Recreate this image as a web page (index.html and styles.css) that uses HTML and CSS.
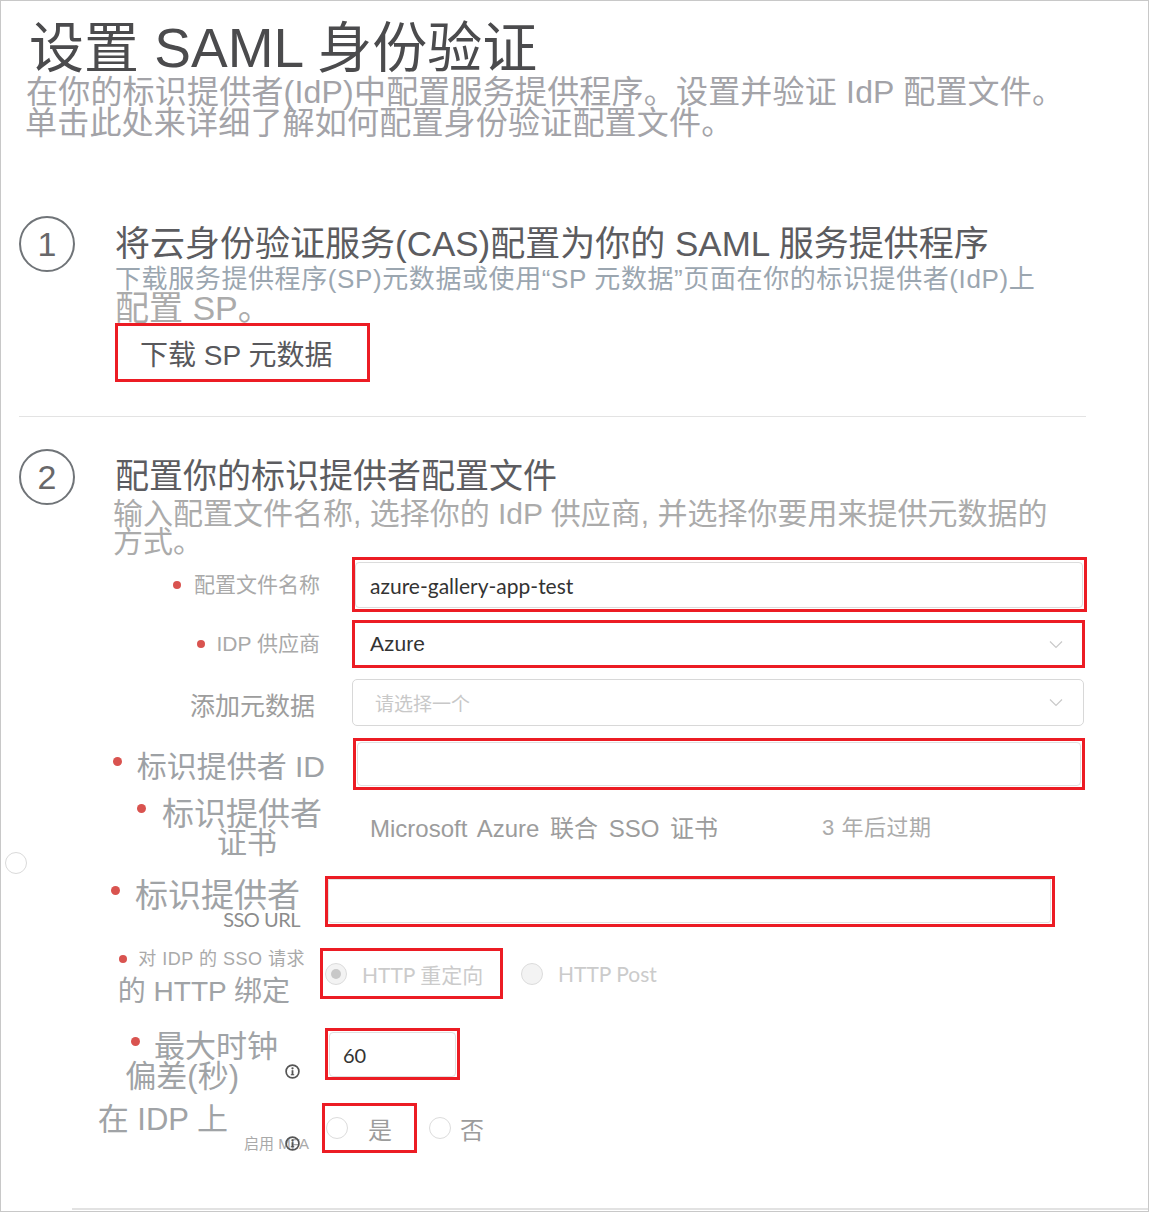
FILE: index.html
```html
<!DOCTYPE html>
<html lang="zh-CN">
<head>
<meta charset="utf-8">
<title>设置 SAML 身份验证</title>
<link rel="stylesheet" href="styles.css">
</head>
<body>
<div class="frame">
  <header class="page-head">
    <h1 class="title">设置 SAML 身份验证</h1>
    <p class="subtitle">在你的标识提供者(IdP)中配置服务提供程序。设置并验证 IdP 配置文件。<br><span class="sub2">单击此处来详细了解如何配置身份验证配置文件。</span></p>
  </header>

  <section class="step step-1">
    <div class="step-num">1</div>
    <div class="step-body">
      <h2 class="step-title">将云身份验证服务(CAS)配置为你的 SAML 服务提供程序</h2>
      <p class="step-desc">下载服务提供程序(SP)元数据或使用“SP 元数据”页面在你的标识提供者(IdP)上</p>
      <p class="step-desc-big">配置 SP。</p>
      <div class="hl btn-download"><span>下载 SP 元数据</span></div>
    </div>
  </section>

  <div class="divider"></div>

  <section class="step step-2">
    <div class="step-num">2</div>
    <div class="step-body">
      <h2 class="step-title">配置你的标识提供者配置文件</h2>
      <p class="step-desc2">输入配置文件名称, 选择你的 IdP 供应商, 并选择你要用来提供元数据的<br>方式。</p>
    </div>
  </section>

  <div class="form">
    <div class="row r1">
      <div class="lab"><div class="lab-line"><span class="dot"></span>配置文件名称</div></div>
      <div class="hl f1"><div class="input"><span class="val">azure-gallery-app-test</span></div></div>
    </div>

    <div class="row r2">
      <div class="lab"><div class="lab-line"><span class="dot"></span>IDP 供应商</div></div>
      <div class="hl f2">
        <span class="val-arial">Azure</span>
        <svg class="chev" width="14" height="9" viewBox="0 0 14 9"><path d="M1 1.5 L7 7.5 L13 1.5" fill="none" stroke="#c9c9c9" stroke-width="1.2"/></svg>
      </div>
    </div>

    <div class="row r3">
      <div class="lab"><div class="lab-line">添加元数据</div></div>
      <div class="select f3">
        <span class="placeholder">请选择一个</span>
        <svg class="chev" width="14" height="9" viewBox="0 0 14 9"><path d="M1 1.5 L7 7.5 L13 1.5" fill="none" stroke="#c9c9c9" stroke-width="1.2"/></svg>
      </div>
    </div>

    <div class="row r4">
      <div class="lab"><div class="lab-line"><span class="dot dot-lg"></span>标识提供者 ID</div></div>
      <div class="hl f4"><div class="input"></div></div>
    </div>

    <div class="row r5">
      <span class="ghost-radio"></span>
      <div class="lab">
        <div class="lab-line"><span class="dot dot-lg"></span>
          <div class="stack"><span class="l5a">标识提供者</span><span class="l5b">证书</span></div>
        </div>
      </div>
      <span class="cert">Microsoft Azure 联合 SSO 证书</span>
      <span class="expire">3 年后过期</span>
    </div>

    <div class="row r6">
      <div class="lab">
        <div class="lab-line"><span class="dot dot-lg"></span>标识提供者</div>
        <div class="lab-sub">SSO URL</div>
      </div>
      <div class="hl f6"><div class="input"></div></div>
    </div>

    <div class="row r7">
      <div class="lab">
        <div class="lab-line l7a"><span class="dot"></span>对 IDP 的 SSO 请求</div>
        <div class="lab-line l7b">的 HTTP 绑定</div>
      </div>
      <div class="hl f7">
        <span class="radio disabled checked"></span>
        <span class="opt opt-dis">HTTP 重定向</span>
      </div>
      <span class="radio disabled ext"></span>
      <span class="opt opt-dis">HTTP Post</span>
    </div>

    <div class="row r8">
      <div class="lab">
        <div class="lab-line l8a"><span class="dot dot-lg"></span>最大时钟</div>
        <div class="lab-line l8b">偏差(秒)<svg class="info" width="15" height="15" viewBox="0 0 15 15"><circle cx="7.5" cy="7.5" r="6.4" fill="none" stroke="#555" stroke-width="1.7"/><circle cx="7.5" cy="4.3" r="1.15" fill="#555"/><rect x="6.6" y="6.2" width="1.8" height="4.8" fill="#555"/><rect x="5.8" y="10.2" width="3.4" height="1.1" fill="#555"/></svg></div>
      </div>
      <div class="hl f8"><div class="input"><span class="val">60</span></div></div>
    </div>

    <div class="row r9">
      <div class="lab">
        <div class="lab-line l9a">在 IDP 上</div>
        <div class="lab-line l9b"><span>启用 MFA</span><svg class="info info-over" width="15" height="15" viewBox="0 0 15 15"><circle cx="7.5" cy="7.5" r="6.4" fill="none" stroke="#555" stroke-width="1.7"/><circle cx="7.5" cy="4.3" r="1.15" fill="#555"/><rect x="6.6" y="6.2" width="1.8" height="4.8" fill="#555"/><rect x="5.8" y="10.2" width="3.4" height="1.1" fill="#555"/></svg></div>
      </div>
      <div class="hl f9">
        <span class="radio"></span>
        <span class="opt opt-yes">是</span>
      </div>
      <span class="radio ext2"></span>
      <span class="opt opt-no">否</span>
    </div>
  </div>

  <div class="divider bottom"></div>
</div>
</body>
</html>
```

FILE: styles.css
```css
html, body {
  margin: 0;
  padding: 0;
  background: #fff;
}

.frame {
  width: 1149px;
  height: 1212px;
  box-sizing: border-box;
  border: 1px solid #c8c8c8;
  background: #fff;
  overflow: hidden;
  font-family: "Liberation Sans", "Noto Sans CJK SC", sans-serif;
  color: #555;
}

/* header */
.page-head {
  padding: 20px 0 0 27px;
}
.title {
  margin: 0 0 0 1px;
  font-size: 55px;
  line-height: 55px;
  font-weight: normal;
  color: #4b4b4d;
  white-space: nowrap;
}
.subtitle {
  margin: 1px 0 0 -2px;
  font-size: 32px;
  line-height: 31px;
  letter-spacing: 0.2px;
  color: #a3a3a8;
  white-space: nowrap;
}
.sub2 {
  margin-left: -1px;
}

/* steps */
.step {
  display: flex;
  align-items: flex-start;
  gap: 40px;
  padding-left: 18px;
}
.step-1 {
  margin-top: 77px;
}
.step-2 {
  margin-top: 32px;
}
.step-num {
  flex: none;
  width: 56px;
  height: 56px;
  box-sizing: border-box;
  border: 2px solid #707478;
  border-radius: 50%;
  display: flex;
  align-items: center;
  justify-content: center;
  font-size: 34px;
  color: #68686a;
}
.step-body {
  padding-top: 11px;
}
.step-2 .step-body {
  padding-top: 10px;
}
.step-title {
  margin: 0;
  font-size: 35px;
  line-height: 34px;
  font-weight: normal;
  color: #5c5c60;
  white-space: nowrap;
}
.step-2 .step-title {
  font-size: 34px;
}
.step-desc {
  margin: 4px 0 0 0;
  font-size: 26px;
  line-height: 28px;
  letter-spacing: 0.6px;
  color: #9ba6b0;
  white-space: nowrap;
}
.step-desc-big {
  margin: 1px 0 0 0;
  font-size: 34px;
  line-height: 29px;
  color: #ababab;
  white-space: nowrap;
}
.step-desc2 {
  margin: 7px 0 0 -2px;
  font-size: 30px;
  line-height: 28px;
  color: #ababab;
  white-space: nowrap;
}

.hl {
  box-sizing: border-box;
  border: 3px solid #ec1c24;
  flex: none;
}
.btn-download {
  width: 255px;
  height: 59px;
  display: flex;
  align-items: center;
  padding-left: 22px;
  font-size: 28px;
  color: #58585c;
  white-space: nowrap;
}

.divider {
  margin: 34px 0 0 18px;
  width: 1067px;
  border-top: 1px solid #e3e3e3;
}
.divider.bottom {
  margin: 55px 0 0 71px;
  width: 1080px;
  border-top: 2px solid #e2e2e2;
}

/* form */
.form {
  margin-top: 1px;
}
.row {
  display: flex;
  align-items: center;
}
.lab {
  flex: none;
  display: flex;
  flex-direction: column;
  align-items: flex-end;
  color: #a9a9a9;
}
.lab-line {
  display: flex;
  align-items: center;
  white-space: nowrap;
}
.dot {
  flex: none;
  width: 8px;
  height: 8px;
  border-radius: 50%;
  background: #d9534f;
}
.dot-lg {
  width: 9px;
  height: 9px;
  align-self: flex-start;
}

.input {
  box-sizing: border-box;
  border: 1px solid #dcdcdc;
  border-radius: 4px;
  display: flex;
  align-items: center;
}
.val {
  font-family: Lato, "Liberation Sans", sans-serif;
  color: #333;
  white-space: nowrap;
}
.val-arial {
  font-size: 21px;
  color: #333;
}
.chev {
  flex: none;
}

/* row 1 */
.r1 { height: 55px; }
.r1 .lab { width: 351px; }
.r1 .lab-line { margin-right: 32px; font-size: 21px; line-height: 24px; }
.r1 .dot { margin-right: 13px; }
.f1 { width: 735px; height: 55px; }
.f1 .input {
  height: 46px;
  margin: 2px 1px 1px 0;
  padding-left: 14px;
}
.f1 .val { font-size: 21px; }

/* row 2 */
.r2 { height: 48px; margin-top: 8px; }
.r2 .lab { width: 351px; }
.r2 .lab-line { margin-right: 32px; font-size: 21px; line-height: 24px; }
.r2 .dot { margin-right: 12px; }
.f2 {
  width: 733px;
  height: 48px;
  display: flex;
  align-items: center;
  justify-content: space-between;
  padding: 0 19px 0 15px;
}

/* row 3 */
.r3 { height: 47px; margin-top: 11px; }
.r3 .lab { width: 351px; margin-top: 6px; }
.r3 .lab-line { margin-right: 37px; font-size: 25px; line-height: 26px; color: #9d9d9d; }
.f3 {
  flex: none;
  width: 732px;
  height: 47px;
  box-sizing: border-box;
  border: 1px solid #d8d8d8;
  border-radius: 5px;
  display: flex;
  align-items: center;
  justify-content: space-between;
  padding: 0 20px 0 22px;
}
.placeholder {
  font-size: 19px;
  color: #c8c8c8;
}

/* row 4 */
.r4 { height: 52px; margin-top: 12px; }
.r4 .lab { width: 352px; margin-top: 6px; }
.r4 .lab-line { margin-right: 28px; font-size: 30px; line-height: 30px; color: #9da1a5; }
.r4 .dot { margin: 5px 15px 0 0; }
.f4 { width: 732px; height: 52px; }
.f4 .input {
  height: 44px;
  margin: 1px 1px 1px 1px;
  border-color: #e0e0e0;
}

/* row 5 */
.r5 { height: 66px; margin-top: 5px; }
.ghost-radio {
  flex: none;
  width: 22px;
  height: 22px;
  box-sizing: border-box;
  border: 1px solid #dadada;
  border-radius: 50%;
  margin-left: 4px;
  align-self: flex-end;
  margin-bottom: -13px;
}
.r5 .lab { width: 343px; }
.r5 .lab-line { margin-right: 48px; color: #a0a3a6; }
.r5 .dot { margin: 5px 16px 0 0; }
.stack {
  display: flex;
  flex-direction: column;
  align-items: center;
}
.l5a { font-size: 32px; line-height: 30px; }
.l5b { font-size: 30px; line-height: 28px; padding-left: 10px; }
.cert {
  font-size: 24px;
  word-spacing: 4px;
  color: #9c9c9c;
  white-space: nowrap;
  margin-top: -4px;
}
.expire {
  margin-left: 104px;
  font-size: 22px;
  letter-spacing: 0.5px;
  color: #ababab;
  white-space: nowrap;
  margin-top: -6px;
}

/* row 6 */
.r6 { height: 51px; margin-top: 15px; }
.r6 .lab { width: 324px; margin-top: 4px; }
.r6 .lab-line { margin-right: 25px; font-size: 33px; line-height: 30px; color: #a0a3a6; }
.r6 .dot { margin: 5px 15px 0 0; }
.lab-sub {
  margin-right: 25px;
  font-family: Lato, "Liberation Sans", sans-serif;
  font-size: 20px;
  line-height: 16px;
  letter-spacing: -0.5px;
  color: #8c8c8c;
  white-space: nowrap;
}
.f6 { width: 730px; height: 51px; }
.f6 .input {
  height: 44px;
  margin: 0 1px 1px 0;
  border-color: #e2e2e2;
  border-radius: 0 0 3px 3px;
}

/* row 7 */
.r7 { height: 51px; margin-top: 21px; }
.r7 .lab { width: 319px; margin-top: 6px; }
.l7a { margin-right: 15px; font-size: 18px; line-height: 24px; letter-spacing: 0.5px; color: #a9a9a9; }
.l7a .dot { margin-right: 11px; }
.l7b { margin-right: 30px; margin-top: 6px; font-size: 28px; line-height: 30px; color: #a0a3a6; }
.f7 {
  width: 183px;
  height: 51px;
  display: flex;
  align-items: center;
  padding-left: 2px;
}
.radio {
  flex: none;
  width: 22px;
  height: 22px;
  box-sizing: border-box;
  border: 1px solid #dcdcdc;
  border-radius: 50%;
  background: #fff;
  display: flex;
  align-items: center;
  justify-content: center;
}
.radio.disabled {
  background: #f3f3f3;
}
.radio.checked::after {
  content: "";
  width: 10px;
  height: 10px;
  border-radius: 50%;
  background: #c8c8c8;
}
.opt {
  white-space: nowrap;
}
.opt-dis {
  font-family: Lato, "Liberation Sans", "Noto Sans CJK SC", sans-serif;
  font-size: 21px;
  color: #cbcbcb;
  margin-left: 15px;
}
.radio.ext {
  margin-left: 18px;
}

/* row 8 */
.r8 { height: 52px; margin-top: 29px; }
.r8 .lab { width: 324px; margin-top: 16px; }
.l8a { margin-right: 47px; font-size: 31px; line-height: 30px; color: #a0a3a6; }
.l8a .dot { margin: 5px 14px 0 0; }
.l8b { margin-right: 25px; font-size: 31px; line-height: 30px; color: #a0a3a6; align-items: flex-start; }
.info {
  flex: none;
}
.l8b .info {
  margin-left: 46px;
  margin-top: 2px;
}
.f8 { width: 135px; height: 52px; }
.f8 .input {
  height: 45px;
  margin: 1px 1px 0 1px;
  padding-left: 13px;
  border-color: #e0e0e0;
}
.f8 .val { font-size: 20px; }

/* row 9 */
.r9 { height: 50px; margin-top: 23px; }
.r9 .lab { width: 321px; }
.l9a { margin-right: 94px; font-size: 31px; line-height: 31px; color: #a0a3a6; }
.l9b { margin-right: 22px; font-size: 15px; line-height: 17px; color: #a9a9a9; }
.info-over {
  margin-left: -24px;
}
.f9 {
  width: 95px;
  height: 50px;
  display: flex;
  align-items: center;
  padding-left: 1px;
}
.opt-yes {
  margin-left: 20px;
  font-size: 24px;
  color: #9c9c9c;
}
.radio.ext2 {
  margin-left: 12px;
}
.opt-no {
  margin-left: 9px;
  font-size: 24px;
  color: #9c9c9c;
}
```
